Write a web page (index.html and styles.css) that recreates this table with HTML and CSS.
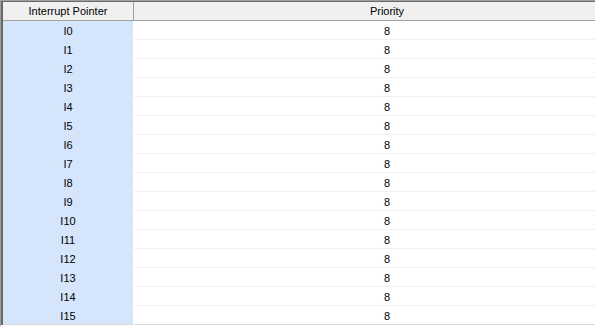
FILE: index.html
```html
<!DOCTYPE html>
<html>
<head>
<meta charset="utf-8">
<link rel="stylesheet" href="styles.css">
</head>
<body>
<div class="frame">
  <div class="grid">
    <div class="row head">
      <div class="cell key">Interrupt Pointer</div>
      <div class="cell val">Priority</div>
    </div>
    <div class="row"><div class="cell key">I0</div><div class="cell val">8</div></div>
    <div class="row"><div class="cell key">I1</div><div class="cell val">8</div></div>
    <div class="row"><div class="cell key">I2</div><div class="cell val">8</div></div>
    <div class="row"><div class="cell key">I3</div><div class="cell val">8</div></div>
    <div class="row"><div class="cell key">I4</div><div class="cell val">8</div></div>
    <div class="row"><div class="cell key">I5</div><div class="cell val">8</div></div>
    <div class="row"><div class="cell key">I6</div><div class="cell val">8</div></div>
    <div class="row"><div class="cell key">I7</div><div class="cell val">8</div></div>
    <div class="row"><div class="cell key">I8</div><div class="cell val">8</div></div>
    <div class="row"><div class="cell key">I9</div><div class="cell val">8</div></div>
    <div class="row"><div class="cell key">I10</div><div class="cell val">8</div></div>
    <div class="row"><div class="cell key">I11</div><div class="cell val">8</div></div>
    <div class="row"><div class="cell key">I12</div><div class="cell val">8</div></div>
    <div class="row"><div class="cell key">I13</div><div class="cell val">8</div></div>
    <div class="row"><div class="cell key">I14</div><div class="cell val">8</div></div>
    <div class="row last"><div class="cell key">I15</div><div class="cell val">8</div></div>
  </div>
</div>
</body>
</html>
```
FILE: styles.css
```css
html, body {
  margin: 0;
  padding: 0;
  background: #ffffff;
}
body {
  width: 595px;
  height: 326px;
  overflow: hidden;
  font-family: "Liberation Sans", Arial, sans-serif;
  font-size: 11px;
  color: #000000;
}
.frame {
  border-left: 1px solid #a0a0a0;
  border-top: 1px solid #a0a0a0;
  height: 325px;
  overflow: hidden;
}
.grid {
  border-left: 2px solid #696969;
  border-top: 1px solid #696969;
  width: 700px;
}
.row {
  display: flex;
  height: 19px;
}
.cell {
  display: flex;
  align-items: center;
  justify-content: center;
  box-sizing: border-box;
}
.key {
  width: 130px;
  background: #d5e6fc;
}
.val {
  width: 506px;
  margin-left: 1px;
  border-bottom: 1px solid #f0f0f0;
  padding-top: 1px;
}
.row .key {
  padding-top: 1px;
}
.head {
  height: 18px;
  background: #f0f0f0;
  border-bottom: 1px solid #a0a0a0;
}
.head .key {
  background: #f0f0f0;
  border-right: 1px solid #a0a0a0;
  width: 131px;
  padding-top: 0;
}
.head .val {
  margin-left: 0;
  border-bottom: none;
  padding-top: 0;
}
.last .val,
.last .key {
  border-bottom: 1px solid #d8d8d8;
}
```
